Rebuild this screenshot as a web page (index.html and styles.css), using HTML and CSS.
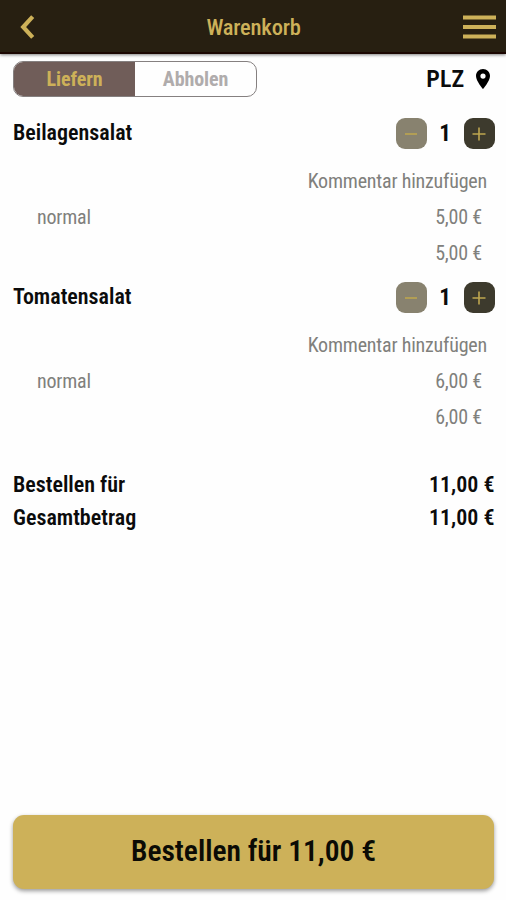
FILE: index.html
```html
<!DOCTYPE html>
<html lang="de">
<head>
<meta charset="utf-8">
<title>Warenkorb</title>
<link rel="stylesheet" href="styles.css">
</head>
<body>
<header class="bar">
  <svg class="back" width="15" height="24" viewBox="0 0 15 24"><path d="M12.700 1.700L3.200 12l9.500 10.300"/></svg>
  <h1 class="title">Warenkorb</h1>
  <svg class="menu" width="33" height="24" viewBox="0 0 33 24"><path d="M0 2.500h33M0 12h33M0 21.500h33"/></svg>
</header>
<main class="cart">
  <div class="options">
    <div class="toggle"><span class="tab active">Liefern</span><span class="tab">Abholen</span></div>
    <div class="plz"><span class="plz-text">PLZ</span><svg width="14" height="20" viewBox="0 0 14 20"><path fill-rule="evenodd" d="M7 0C3.100 0 0 3.100 0 7c0 5 7 13 7 13s7-8 7-13c0-3.900-3.100-7-7-7zm0 4.500a2.600 2.600 0 1 1 0 5.200a2.600 2.600 0 1 1 0-5.200z"/></svg></div>
  </div>
  <section class="item">
    <div class="head"><h2 class="name">Beilagensalat</h2>
      <div class="stepper"><span class="step off"><svg width="14" height="14" viewBox="0 0 14 14"><path d="M1 7h12"/></svg></span><span class="count">1</span><span class="step"><svg width="14" height="14" viewBox="0 0 14 14"><path d="M.5 7h13M7 .5v13"/></svg></span></div></div>
    <div class="line comment"><span class="hint">Kommentar hinzufügen</span></div>
    <div class="line"><span class="variant">normal</span><span class="price">5,00 €</span></div>
    <div class="line last"><span class="price">5,00 €</span></div>
  </section>
  <section class="item">
    <div class="head"><h2 class="name">Tomatensalat</h2>
      <div class="stepper"><span class="step off"><svg width="14" height="14" viewBox="0 0 14 14"><path d="M1 7h12"/></svg></span><span class="count">1</span><span class="step"><svg width="14" height="14" viewBox="0 0 14 14"><path d="M.5 7h13M7 .5v13"/></svg></span></div></div>
    <div class="line comment"><span class="hint">Kommentar hinzufügen</span></div>
    <div class="line"><span class="variant">normal</span><span class="price">6,00 €</span></div>
    <div class="line last"><span class="price">6,00 €</span></div>
  </section>
  <section class="totals">
    <div class="total"><span class="label">Bestellen für</span><span class="sum">11,00 €</span></div>
    <div class="total"><span class="label">Gesamtbetrag</span><span class="sum">11,00 €</span></div>
  </section>
</main>
<button class="order"><span class="order-text">Bestellen für 11,00 €</span></button>
</body>
</html>
```
FILE: styles.css
```css
* { box-sizing: border-box; }
body {
  margin: 0;
  height: 900px;
  display: flex;
  flex-direction: column;
  overflow: hidden;
  background: #fefefe;
  color: #0b0b0b;
  font-family: "Roboto Condensed", Roboto, sans-serif;
  font-stretch: 75%;
}
.bar {
  height: 54px;
  flex: none;
  display: flex;
  align-items: center;
  justify-content: space-between;
  padding: 2px 10px 0 20px;
  background: #271f11;
  border-bottom: 2px solid #1c0702;
  box-shadow: 0 1px 3px rgba(0, 0, 0, .5);
}
.bar path { fill: none; stroke: #cdb159; stroke-width: 4.200; }
.title { margin: 0; padding-left: 9px; font-size: 22.500px; font-weight: 500; color: #cdb159; letter-spacing: -.2px; }
.cart { flex: 1; padding: 7px 11.500px 0 13px; }
.options { display: flex; justify-content: space-between; height: 36px; }
.toggle {
  width: 244px;
  display: flex;
  border: 1px solid #858080;
  border-radius: 10px;
  overflow: hidden;
}
.tab { flex: 1; display: flex; align-items: center; justify-content: center; font-size: 20px; font-weight: 700; color: #b0acac; letter-spacing: -.1px; }
.active { background: #705d59; color: #cdb159; }
.plz { display: flex; align-items: center; gap: 11px; padding: 0 5px 1px 0; font-size: 24px; font-weight: 600; letter-spacing: .2px; }
.head { display: flex; justify-content: space-between; height: 69.500px; padding-top: 21px; }
.name { margin: 0; font-size: 22px; line-height: 29px; font-weight: 600; letter-spacing: 0; }
.stepper { display: flex; height: 31px; align-items: center; }
.step { width: 31px; height: 31px; border-radius: 9px; background: #3d3a2d; display: flex; align-items: center; justify-content: center; }
.off { background: #88826f; }
.step path { fill: none; stroke: #bda64f; stroke-width: 1.600; }
.count { width: 37px; text-align: center; font-size: 23px; font-weight: 700; }
.line { display: flex; height: 36px; line-height: 29px; padding: 0 12.500px 0 24px; font-size: 20px; color: #80807c; letter-spacing: -.2px; }
.comment { padding-right: 7.500px; }
.last { height: 22.500px; }
.hint, .price { margin-left: auto; }
.totals { padding-top: 43px; }
.total { display: flex; justify-content: space-between; height: 33px; line-height: 33px; font-size: 22px; font-weight: 600; letter-spacing: 0; }
.order {
  flex: none;
  height: 74px;
  margin: 0 12px 11px 13px;
  padding: 0 0 2px;
  border: 0;
  border-radius: 11px;
  background: #cdb159;
  box-shadow: 0 2px 4px rgba(0, 0, 0, .4);
  font: inherit;
  font-size: 29.500px;
  font-weight: 600;
  color: #0b0b05;
}
```
